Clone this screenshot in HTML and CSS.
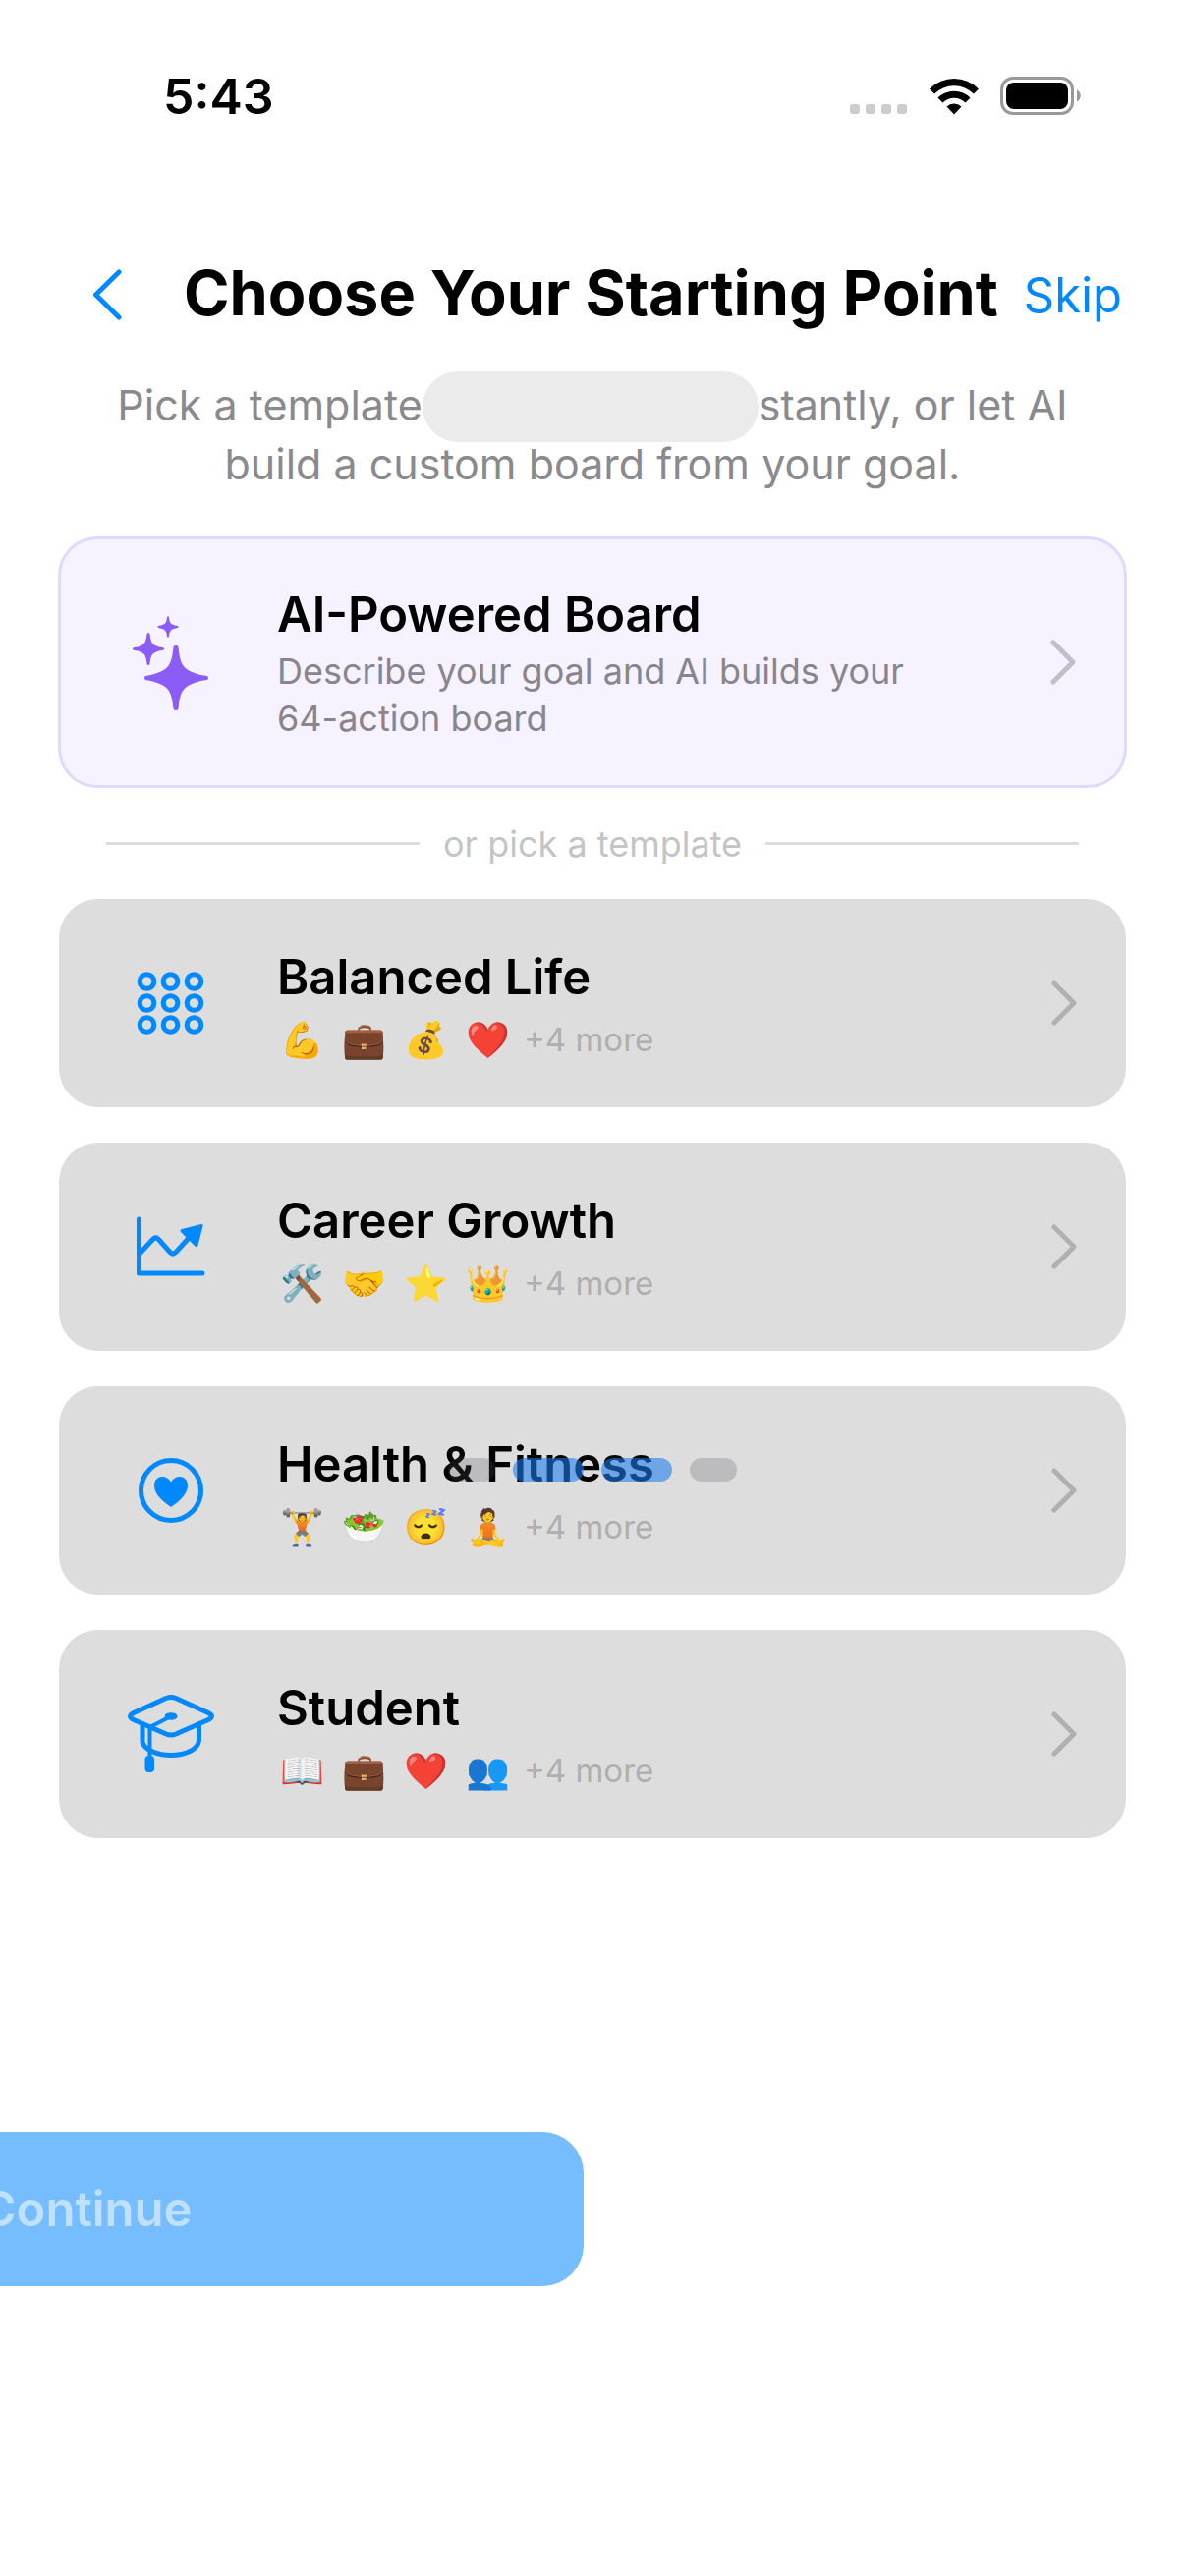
FILE: index.html
```html
<!DOCTYPE html>
<html lang="en">
<head>
    <meta charset="UTF-8">
    <meta name="viewport" content="width=device-width, initial-scale=1.0">
    <title>Choose Your Starting Point</title>
    <link rel="stylesheet" href="styles.css">
</head>
<body>
    <div class="status-bar">
        <span class="time">5:43</span>
        <div class="status-icons">
            <div class="signal"><i></i><i></i><i></i><i></i></div>
            <svg class="wifi" viewBox="0 0 52 38" aria-hidden="true">
                <path d="M1 11.500A35 35 0 0 1 51 11.500L46 16.500A28.500 28.500 0 0 0 6 16.500Z"/>
                <path d="M9.500 20.500A23.500 23.500 0 0 1 42.500 20.500L37.500 25.500A16.500 16.500 0 0 0 14.500 25.500Z"/>
                <path d="M18.500 29.500A11 11 0 0 1 33.500 29.500L26 37.500Z"/>
            </svg>
            <svg class="battery" viewBox="0 0 84 40" aria-hidden="true">
                <rect x="1.500" y="1.500" width="72" height="36" rx="11.500" fill="none" stroke="#999" stroke-width="3"/>
                <rect x="6" y="6" width="63" height="27" rx="8"/>
                <path d="M78 13.500C83 15.500 83 23.500 78 25.500Z" fill="#999"/>
            </svg>
        </div>
    </div>

    <header class="header">
        <button class="back-btn" aria-label="Back">
            <svg viewBox="0 0 30 52" aria-hidden="true"><path d="M27 3L3.500 26L27 49"/></svg>
        </button>
        <h1>Choose Your Starting Point</h1>
        <button class="skip-btn">Skip</button>
    </header>

    <p class="subtitle">Pick a template<span class="pill"></span>stantly, or let AI<br>build a custom board from your goal.</p>

    <main class="options">
        <button class="card card-ai">
            <svg class="card-icon" viewBox="5 0 132 96" aria-hidden="true">
                <path d="M76 31C78 31 78.500 32 78.700 34C80.500 52 84 57 104 61.500C108 62 109 62.300 109 64C109 65.700 108 66 104 66.500C84 71 80.500 76 78.700 94C78.500 96 78 97 76 97C74 97 73.500 96 73.300 94C71.500 76 68 71 48 66.500C45 66 44 65.700 44 64C44 62.300 45 62 48 61.500C68 57 71.500 52 73.300 34C73.500 32 74 31 76 31Z"/>
                <path d="M48 18C49.200 18 49.500 19 49.600 20C50.500 29 52.500 31.500 62 33C63.500 33.200 64 33.500 64 34.500C64 35.500 63.500 35.800 62 36C52.500 37.500 50.500 40 49.600 49C49.500 50 49.200 51 48 51C46.800 51 46.500 50 46.400 49C45.500 40 43.500 37.500 34 36C32.500 35.800 32 35.500 32 34.500C32 33.500 32.500 33.200 34 33C43.500 31.500 45.500 29 46.400 20C46.500 19 46.800 18 48 18Z"/>
                <path d="M68 1C68.800 1 69 2 69.100 3C69.600 8 71 9.800 77 10.800C78 11 78.500 11.300 78.500 12C78.500 12.700 78 13 77 13.200C71 14.200 69.600 16 69.100 21C69 22 68.800 22.500 68 22.500C67.200 22.500 67 22 66.900 21C66.400 16 65 14.200 59 13.200C58 13 57.500 12.700 57.500 12C57.500 11.300 58 11 59 10.800C65 9.800 66.400 8 66.900 3C67 2 67.200 1 68 1Z"/>
            </svg>
            <span class="card-body">
                <span class="card-title">AI-Powered Board</span>
                <span class="card-desc">Describe your goal and AI builds your<br>64-action board</span>
            </span>
            <svg class="chevron" viewBox="0 0 26 48" aria-hidden="true"><path d="M3 4L23 24L3 44"/></svg>
        </button>

        <div class="divider"><span>or pick a template</span></div>

        <button class="card">
            <svg class="card-icon" viewBox="0 0 132 96" aria-hidden="true">
                <g class="line">
                    <circle cx="41.500" cy="26" r="7.300"/><circle cx="65.500" cy="26" r="7.300"/><circle cx="89.500" cy="26" r="7.300"/>
                    <circle cx="41.500" cy="48" r="7.300"/><circle cx="65.500" cy="48" r="7.300"/><circle cx="89.500" cy="48" r="7.300"/>
                    <circle cx="41.500" cy="70" r="7.300"/><circle cx="65.500" cy="70" r="7.300"/><circle cx="89.500" cy="70" r="7.300"/>
                </g>
            </svg>
            <span class="card-body">
                <span class="card-title">Balanced Life</span>
                <span class="tags"><i>💪</i><i>💼</i><i>💰</i><i>❤️</i><small>+4 more</small></span>
            </span>
            <svg class="chevron" viewBox="0 0 26 48" aria-hidden="true"><path d="M3 4L23 24L3 44"/></svg>
        </button>

        <button class="card">
            <svg class="card-icon" viewBox="0 0 132 96" aria-hidden="true">
                <path class="line" d="M33.500 20V75H98M35 54L47.500 40.500Q50.500 37.500 53.500 40.500L65 53.500Q68 56.500 71 53.500L86 37"/>
                <path d="M77 30L97 25Q99 24.500 98.500 27L93.500 46.500Q92 49 90.500 47.500L76 33Q74.500 31 77 30Z"/>
            </svg>
            <span class="card-body">
                <span class="card-title">Career Growth</span>
                <span class="tags"><i>🛠️</i><i>🤝</i><i>⭐</i><i>👑</i><small>+4 more</small></span>
            </span>
            <svg class="chevron" viewBox="0 0 26 48" aria-hidden="true"><path d="M3 4L23 24L3 44"/></svg>
        </button>

        <button class="card">
            <svg class="card-icon" viewBox="0 0 132 96" aria-hidden="true">
                <circle class="line" cx="66" cy="48" r="30.500"/>
                <path d="M66 65C60 61 49 53 49 43C49 37 53 34 57 34C61 34 64 36 66 39.500C68 36 71 34 75 34C79 34 83 37 83 43C83 53 72 61 66 65Z"/>
            </svg>
            <span class="card-body">
                <span class="card-title">Health &amp; Fitness</span>
                <span class="tags"><i>🏋️</i><i>🥗</i><i>😴</i><i>🧘</i><small>+4 more</small></span>
            </span>
            <svg class="chevron" viewBox="0 0 26 48" aria-hidden="true"><path d="M3 4L23 24L3 44"/></svg>
            <span class="pager"><b></b><b class="on"></b><b class="on"></b><b></b></span>
        </button>

        <button class="card">
            <svg class="card-icon" viewBox="0 0 132 96" aria-hidden="true">
                <g class="line">
                    <path d="M61 11.500Q66 9.500 71 11.500L104 26.500Q111 30 104 33.500L71 48Q66 50 61 48L28 33.500Q21 30 28 26.500Z"/>
                    <path d="M37 38V56C39 64 52 69.500 66 69.500C80 69.500 94 64 94.500 54V38"/>
                </g>
                <path class="line thin" d="M66 30L44.500 41V74"/>
                <ellipse cx="66" cy="30" rx="6.500" ry="3.800"/>
                <rect x="39.500" y="70" width="9.500" height="17" rx="4"/>
            </svg>
            <span class="card-body">
                <span class="card-title">Student</span>
                <span class="tags"><i>📖</i><i>💼</i><i>❤️</i><i>👥</i><small>+4 more</small></span>
            </span>
            <svg class="chevron" viewBox="0 0 26 48" aria-hidden="true"><path d="M3 4L23 24L3 44"/></svg>
        </button>
    </main>

    <footer class="footer">
        <button class="continue-btn">Continue</button>
    </footer>
</body>
</html>
```

FILE: styles.css
```css
* {
    box-sizing: border-box;
}
body {
    font-family: Inter, "Noto Color Emoji", sans-serif;
    margin: 0;
    min-height: 100vh;
    background: #fff;
    color: #000;
    overflow-x: hidden;
}
button {
    font: inherit;
    color: inherit;
    background: none;
    border: none;
    margin: 0;
    padding: 0;
    cursor: pointer;
}
svg {
    display: block;
    flex: none;
}
.status-bar {
    display: flex;
    justify-content: space-between;
    align-items: center;
    height: 196px;
    padding: 0 104px 0 166px;
}
.time {
    font-size: 50px;
    font-weight: 600;
}
.status-icons {
    display: flex;
    align-items: center;
}
.signal {
    display: flex;
    gap: 6px;
    margin: 26px 22px 0 0;
}
.signal i {
    width: 10px;
    height: 10px;
    border-radius: 3px;
    background: #ccc;
}
.wifi {
    width: 52px;
    height: 38px;
    margin-right: 21px;
}
.battery {
    width: 84px;
    height: 40px;
}
.header {
    display: flex;
    align-items: center;
    height: 208px;
    padding: 0 64px 0 94px;
}
.back-btn svg {
    width: 30px;
    height: 52px;
    fill: none;
    stroke: #08f;
    stroke-width: 5;
    stroke-linecap: round;
    stroke-linejoin: round;
}
h1 {
    margin: 0 0 4px 63px;
    font-size: 63px;
    font-weight: 700;
    white-space: nowrap;
}
.skip-btn {
    margin-left: auto;
    font-size: 49px;
    color: #08f;
}
.subtitle {
    margin: -22px 0 44px;
    font-size: 43px;
    line-height: 60px;
    text-align: center;
    color: #8a8a8e;
}
.pill {
    display: inline-block;
    width: 342px;
    height: 72px;
    margin: -12px 0 -8px;
    border-radius: 36px;
    background: #ebebeb;
    vertical-align: middle;
}
.options {
    display: flex;
    flex-direction: column;
    gap: 36px;
    padding: 0 60px;
}
.card {
    position: relative;
    display: flex;
    align-items: center;
    height: 212px;
    padding: 0 50px 0 48px;
    border-radius: 40px;
    background: #ddd;
    text-align: left;
}
.card-ai {
    height: 256px;
    margin: 0 -1px;
    padding: 0 49px 0 46px;
    border: 3px solid #e1d8fd;
    background: #f6f2ff;
}
.card-icon {
    width: 132px;
    height: 96px;
    margin-right: 42px;
    fill: #08f;
    overflow: visible;
}
.card-ai .card-icon {
    fill: #8b5cf6;
}
.line {
    fill: none;
    stroke: #08f;
    stroke-width: 5;
    stroke-linecap: round;
    stroke-linejoin: round;
}
.thin {
    stroke-width: 4;
}
.card-body {
    flex: 1;
    display: flex;
    flex-direction: column;
    gap: 3px;
    padding-top: 10px;
}
.card-ai .card-body {
    padding-top: 3px;
}
.card-title {
    font-size: 49px;
    font-weight: 600;
    line-height: 60px;
}
.card-desc {
    font-size: 36px;
    line-height: 48px;
    color: #88858f;
}
.tags {
    display: flex;
    align-items: center;
    gap: 18px;
    height: 60px;
    padding-left: 3px;
}
.tags i {
    width: 45px;
    font-size: 36px;
    font-style: normal;
}
.tags small {
    margin-left: -4px;
    font-size: 33px;
    color: #afafb1;
}
.chevron {
    width: 26px;
    height: 48px;
    fill: none;
    stroke: #b0b0b1;
    stroke-width: 5;
    stroke-linecap: round;
    stroke-linejoin: round;
}
.card-ai .chevron {
    stroke: #c1bdc9;
}
.divider {
    display: flex;
    align-items: center;
    gap: 24px;
    height: 45px;
    margin: -2px 48px;
    font-size: 36px;
    color: #c4c4c6;
}
.divider::before,
.divider::after {
    content: "";
    flex: 1;
    height: 3px;
    background: #ddd;
}
/* page indicator floats over the third template */
.pager {
    position: absolute;
    top: 73px;
    left: 50%;
    display: flex;
    gap: 18px;
    transform: translateX(-50%);
}
.pager b {
    width: 48px;
    height: 24px;
    border-radius: 12px;
    background: rgba(84, 84, 92, 0.24);
}
.pager .on {
    width: 72px;
    background: rgba(30, 124, 238, 0.58);
}
.footer {
    padding: 299px 0 294px;
    overflow: hidden;
}
.continue-btn {
    display: block;
    width: 1012px;
    height: 157px;
    margin-left: -418px;
    border-radius: 42px;
    background: #75bdff;
    color: #bfe0ff;
    font-size: 49px;
    font-weight: 600;
}
```
